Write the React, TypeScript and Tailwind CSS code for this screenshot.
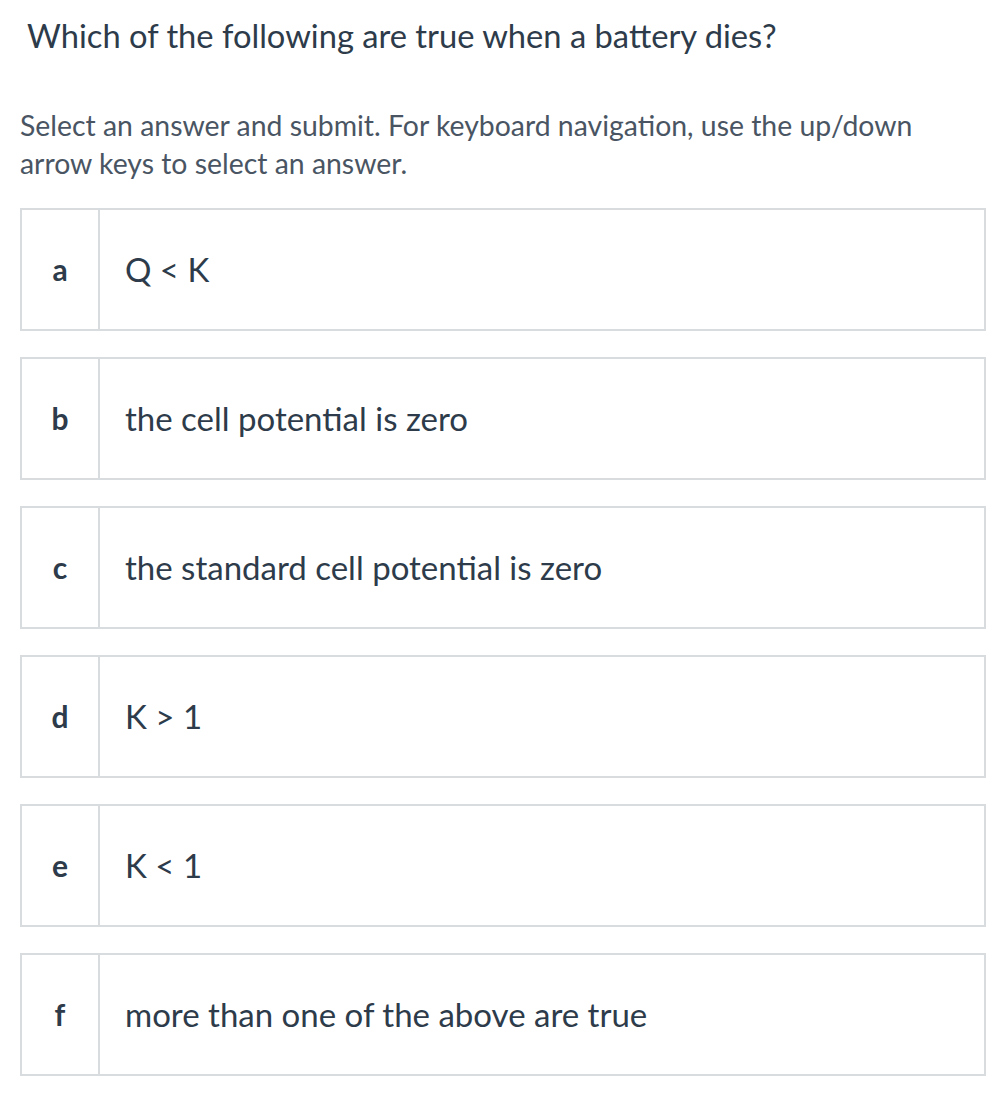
import React from "react";

const options = [
  { k: "a", t: "Q < K" },
  { k: "b", t: "the cell potential is zero" },
  { k: "c", t: "the standard cell potential is zero" },
  { k: "d", t: "K > 1" },
  { k: "e", t: "K < 1" },
  { k: "f", t: "more than one of the above are true" },
];

export default function App() {
  return (
    <div className="w-[1007px] h-[1102px] bg-white" style={{ fontFamily: "Lato, 'Noto Sans', sans-serif" }}>
      <div className="pl-[20px] pr-[21px] pt-[14px]">
        <h1 className="pl-[7px] text-[32.7px] leading-[44px] text-[#2d3b4a]">
          Which of the following are true when a battery dies?
        </h1>
        <p className="mt-[48px] max-w-[920px] text-[28.4px] leading-[38px] text-[#4a5563]">
          Select an answer and submit. For keyboard navigation, use the up/down arrow keys to select an answer.
        </p>
        <div className="mt-[26px] flex flex-col gap-[26px]">
          {options.map((o) => (
            <div key={o.k} className="flex h-[123px] border-2 border-[#d9dcdf]">
              <div className="w-[78px] flex items-center justify-center border-r-2 border-[#d9dcdf] text-[30px] font-bold text-[#2d3b4a]">
                {o.k}
              </div>
              <div className="flex items-center pl-[25px] text-[33px] text-[#2d3b4a]">{o.t}</div>
            </div>
          ))}
        </div>
      </div>
    </div>
  );
}
